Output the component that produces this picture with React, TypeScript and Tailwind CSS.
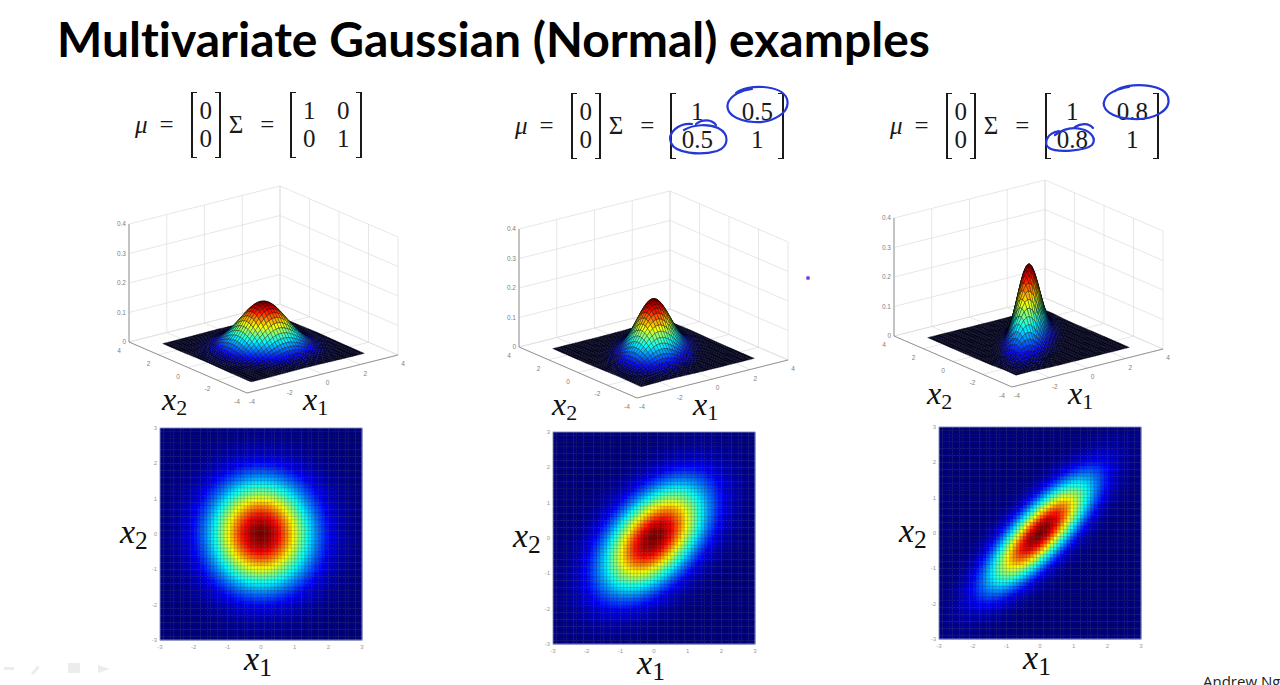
import { useMemo } from "react";

type Pt = [number, number];

const clamp = (x: number) => Math.max(0, Math.min(1, x));

// matlab "jet" colormap, with optional darkening factor k
function jet(v: number, k = 1): string {
  const r = clamp(1.5 - Math.abs(4 * v - 3)) * k;
  const g = clamp(1.5 - Math.abs(4 * v - 2)) * k;
  const b = clamp(1.5 - Math.abs(4 * v - 1)) * k;
  return `rgb(${Math.round(r * 255)},${Math.round(g * 255)},${Math.round(b * 255)})`;
}

function pdf(x: number, y: number, rho: number) {
  const d = 1 - rho * rho;
  return (
    Math.exp(-(x * x - 2 * rho * x * y + y * y) / (2 * d)) /
    (2 * Math.PI * Math.sqrt(d))
  );
}

// projection of the 3d box, measured off the slide
const O = { x: 147, y: 210 };
const E1 = { x: 151, y: -38 };
const E2 = { x: -118, y: -51 };
const EZ = -118;

function proj(a: number, b: number, z: number): Pt {
  const u = (a + 4) / 8;
  const v = (b + 4) / 8;
  return [O.x + u * E1.x + v * E2.x, O.y + u * E1.y + v * E2.y + (z / 0.4) * EZ];
}

const pts = (list: Pt[]) =>
  list.map((p) => `${p[0].toFixed(2)},${p[1].toFixed(2)}`).join(" ");

const TICKS = [-4, -2, 0, 2, 4];
const ZTICKS = [0, 0.1, 0.2, 0.3, 0.4];

function Line({ a, b, stroke = "#dcdcdc", w = 0.7 }: { a: Pt; b: Pt; stroke?: string; w?: number }) {
  return <line x1={a[0]} y1={a[1]} x2={b[0]} y2={b[1]} stroke={stroke} strokeWidth={w} />;
}

function Surface3D({ rho, dot }: { rho: number; dot?: boolean }) {
  const quads = useMemo(() => {
    const N = 40;
    const s = 6 / N;
    const peak = pdf(0, 0, rho);
    const list: { d: number; p: string; c: string }[] = [];
    for (let i = 0; i < N; i++) {
      for (let j = 0; j < N; j++) {
        const a0 = -3 + i * s;
        const b0 = -3 + j * s;
        const a1 = a0 + s;
        const b1 = b0 + s;
        const z00 = pdf(a0, b0, rho);
        const z10 = pdf(a1, b0, rho);
        const z11 = pdf(a1, b1, rho);
        const z01 = pdf(a0, b1, rho);
        const v = (z00 + z10 + z11 + z01) / 4 / peak;
        list.push({
          d: 38 * (a0 + s / 2) + 51 * (b0 + s / 2),
          p: pts([proj(a0, b0, z00), proj(a1, b0, z10), proj(a1, b1, z11), proj(a0, b1, z01)]),
          c: jet(v, 0.35 + 0.65 * clamp(v * 9)),
        });
      }
    }
    list.sort((x, y) => y.d - x.d);
    return list;
  }, [rho]);

  return (
    <svg width={320} height={240} className="block overflow-visible">
      {/* back wall x2 = 4 */}
      {TICKS.map((a) => (
        <Line key={"wa" + a} a={proj(a, 4, 0)} b={proj(a, 4, 0.4)} />
      ))}
      {ZTICKS.map((z) => (
        <Line key={"wz" + z} a={proj(-4, 4, z)} b={proj(4, 4, z)} />
      ))}
      {/* back wall x1 = 4 */}
      {TICKS.map((b) => (
        <Line key={"wb" + b} a={proj(4, b, 0)} b={proj(4, b, 0.4)} />
      ))}
      {ZTICKS.map((z) => (
        <Line key={"wz2" + z} a={proj(4, -4, z)} b={proj(4, 4, z)} />
      ))}
      {/* floor */}
      {TICKS.map((a) => (
        <Line key={"fa" + a} a={proj(a, -4, 0)} b={proj(a, 4, 0)} />
      ))}
      {TICKS.map((b) => (
        <Line key={"fb" + b} a={proj(-4, b, 0)} b={proj(4, b, 0)} />
      ))}
      {/* axes */}
      <Line a={proj(-4, 4, 0)} b={proj(-4, 4, 0.4)} stroke="#8a8a8a" w={0.9} />
      <Line a={proj(-4, -4, 0)} b={proj(-4, 4, 0)} stroke="#8a8a8a" w={0.9} />
      <Line a={proj(-4, -4, 0)} b={proj(4, -4, 0)} stroke="#8a8a8a" w={0.9} />

      {quads.map((q, i) => (
        <polygon
          key={i}
          points={q.p}
          fill={q.c}
          stroke="#000"
          strokeOpacity={0.8}
          strokeWidth={0.4}
        />
      ))}

      <g fontFamily="Liberation Sans, sans-serif" fontSize={6.5} fill="#808080">
        {ZTICKS.map((z) => {
          const p = proj(-4, 4, z);
          return (
            <text key={"tz" + z} x={p[0] - 3} y={p[1] + 2} textAnchor="end">
              {z === 0 ? "0" : z.toFixed(1)}
            </text>
          );
        })}
        {TICKS.map((b) => {
          const p = proj(-4, b, 0);
          return (
            <text key={"tb" + b} x={p[0] - 10} y={p[1] + 11} textAnchor="middle">
              {b}
            </text>
          );
        })}
        {TICKS.map((a) => {
          const p = proj(a, -4, 0);
          return (
            <text key={"ta" + a} x={p[0] + 5} y={p[1] + 11} textAnchor="middle">
              {a}
            </text>
          );
        })}
      </g>

      <g fontFamily="Liberation Serif, serif" fill="#111">
        <text x={62} y={227} fontSize={32} fontStyle="italic">
          x<tspan fontSize={22} fontStyle="normal" dy={5}>2</tspan>
        </text>
        <text x={203} y={227} fontSize={32} fontStyle="italic">
          x<tspan fontSize={22} fontStyle="normal" dy={5}>1</tspan>
        </text>
      </g>
      {dot && <circle cx={318} cy={90} r={2} fill="#7a44e6" />}
    </svg>
  );
}

function Heatmap({ rho }: { rho: number }) {
  const N = 60;
  const W = 202;
  const H = 212;
  const L = 12;
  const T = 4;
  const cw = W / N;
  const ch = H / N;
  const cells = useMemo(() => {
    const peak = pdf(0, 0, rho);
    const out: { x: number; y: number; c: string }[] = [];
    for (let r = 0; r < N; r++) {
      for (let c = 0; c < N; c++) {
        const x = -3 + ((c + 0.5) * 6) / N;
        const y = 3 - ((r + 0.5) * 6) / N;
        out.push({ x: L + c * cw, y: T + r * ch, c: jet(pdf(x, y, rho) / peak) });
      }
    }
    return out;
  }, [rho, cw, ch]);

  const labels = [-3, -2, -1, 0, 1, 2, 3];
  return (
    <svg width={220} height={232} className="block">
      {cells.map((k, i) => (
        <rect key={i} x={k.x} y={k.y} width={cw + 0.3} height={ch + 0.3} fill={k.c} />
      ))}
      <g stroke="#000" strokeOpacity={0.35} strokeWidth={0.5}>
        {Array.from({ length: N + 1 }, (_, i) => (
          <line key={"v" + i} x1={L + i * cw} y1={T} x2={L + i * cw} y2={T + H} />
        ))}
        {Array.from({ length: N + 1 }, (_, i) => (
          <line key={"h" + i} x1={L} y1={T + i * ch} x2={L + W} y2={T + i * ch} />
        ))}
      </g>
      <rect x={L} y={T} width={W} height={H} fill="none" stroke="#8f9fd0" strokeWidth={0.8} />
      <g fontFamily="Liberation Sans, sans-serif" fontSize={6} fill="#999">
        {labels.map((t) => (
          <text key={"l" + t} x={L - 3} y={T + ((3 - t) / 6) * H + 2} textAnchor="end">
            {t}
          </text>
        ))}
        {labels.map((t) => (
          <text key={"b" + t} x={L + ((t + 3) / 6) * W} y={T + H + 9} textAnchor="middle">
            {t}
          </text>
        ))}
      </g>
    </svg>
  );
}

function Bracketed({ children, className }: { children: React.ReactNode; className: string }) {
  return (
    <div className="flex items-stretch">
      <div className="w-[6px] border-y-[1.5px] border-l-2 border-[#1a1a1a]" />
      <div className={className}>{children}</div>
      <div className="w-[6px] border-y-[1.5px] border-r-2 border-[#1a1a1a]" />
    </div>
  );
}

function Scribble({ paths }: { paths: string[] }) {
  return (
    <svg
      width={130}
      height={70}
      className="pointer-events-none absolute left-0 top-0 overflow-visible"
    >
      {paths.map((d, i) => (
        <path
          key={i}
          d={d}
          fill="none"
          stroke="#2438d6"
          strokeWidth={2.2}
          strokeLinecap="round"
          strokeLinejoin="round"
        />
      ))}
    </svg>
  );
}

type Col = {
  rho: number;
  m: string[][];
  wide: boolean;
  scribble: string[];
  colClass: string;
  formulaClass: string;
  plotClass: string;
  heatClass: string;
  labelClass: string;
  dot?: boolean;
};

const columns: Col[] = [
  {
    rho: 0,
    m: [
      ["1", "0"],
      ["0", "1"],
    ],
    wide: false,
    scribble: [],
    colClass: "w-[390px]",
    formulaClass: "mt-[4px] ml-[35px]",
    plotClass: "mt-[25px]",
    heatClass: "mt-[1px]",
    labelClass: "ml-[20px]",
  },
  {
    rho: 0.5,
    m: [
      ["1", "0.5"],
      ["0.5", "1"],
    ],
    wide: true,
    scribble: [
      "M 66 0 C 76 -9, 112 -9, 117 6 C 121 20, 102 30, 84 29 C 66 28, 55 20, 58 10 C 61 2, 72 -3, 82 -4",
      "M 22 31 C 8 30, -3 40, 1 50 C 5 60, 30 63, 47 58 C 59 54, 60 41, 48 35 C 39 31, 24 31, 14 37",
      "M 26 31 C 32 26, 42 26, 46 32",
    ],
    colClass: "w-[375px]",
    formulaClass: "mt-[5px] ml-[25px]",
    plotClass: "mt-[29px]",
    heatClass: "mt-0",
    labelClass: "ml-[23px]",
    dot: true,
  },
  {
    rho: 0.8,
    m: [
      ["1", "0.8"],
      ["0.8", "1"],
    ],
    wide: true,
    scribble: [
      "M 70 -2 C 82 -11, 118 -10, 123 4 C 127 18, 108 27, 88 26 C 66 25, 55 16, 60 6 C 63 0, 72 -4, 84 -6",
      "M 14 38 C 2 40, -2 50, 4 55 C 12 60, 40 58, 47 52 C 52 46, 46 38, 36 36 C 28 34, 18 36, 10 42",
      "M 30 34 C 36 30, 44 30, 48 35",
    ],
    colClass: "w-[400px]",
    formulaClass: "mt-[5px] ml-[25px]",
    plotClass: "mt-[18px]",
    heatClass: "mt-[6px]",
    labelClass: "ml-[34px]",
  },
];

function MathX({ sub }: { sub: string }) {
  return (
    <span className="font-['Liberation_Serif',serif] text-[34px] italic leading-[30px] text-[#111]">
      x<sub className="not-italic">{sub}</sub>
    </span>
  );
}

function Formula({ col }: { col: Col }) {
  return (
    <div
      className={`flex h-[66px] items-center font-['Liberation_Serif',serif] text-[25px] text-[#1a1a1a] ${col.formulaClass}`}
    >
      <span className="italic">μ</span>
      <span className="ml-[12px]">=</span>
      <div className="ml-[17px] self-stretch">
        <Bracketed className="grid w-[18px] grid-cols-1 py-[5px] text-center leading-[28px]">
          <span>0</span>
          <span>0</span>
        </Bracketed>
      </div>
      <span className="ml-[8px]">Σ</span>
      <span className="ml-[17px]">=</span>
      <div className="relative ml-[16px] self-stretch">
        <Bracketed
          className={
            col.wide
              ? "grid grid-cols-[42px_42px] gap-x-[18px] py-[5px] text-center leading-[28px]"
              : "grid grid-cols-[14px_14px] gap-x-[20px] px-[6px] py-[5px] text-center leading-[28px]"
          }
        >
          {col.m.flat().map((v, i) => (
            <span key={i}>{v}</span>
          ))}
        </Bracketed>
        {col.scribble.length > 0 && <Scribble paths={col.scribble} />}
      </div>
    </div>
  );
}

export default function App() {
  return (
    <div className="relative h-[685px] w-[1280px] overflow-hidden bg-white">
      <h1 className="h-[88px] pl-[57px] pt-[11px] font-['Lato',sans-serif] text-[48px] font-bold leading-[56px] text-black [font-variant-ligatures:none]">
        Multivariate Gaussian (Normal) examples
      </h1>

      <div className="flex pl-[100px]">
        {columns.map((col, i) => (
          <div key={i} className={`flex shrink-0 flex-col ${col.colClass}`}>
            <Formula col={col} />
            <div className={col.plotClass}>
              <Surface3D rho={col.rho} dot={col.dot} />
            </div>
            <div className={`flex items-center ${col.heatClass}`}>
              <div className={`mb-[34px] w-[28px] ${col.labelClass}`}>
                <MathX sub="2" />
              </div>
              <div className="flex flex-col items-center">
                <Heatmap rho={col.rho} />
                <div className="-mt-[12px]">
                  <MathX sub="1" />
                </div>
              </div>
            </div>
          </div>
        ))}
      </div>

      {/* faint player controls, bottom left */}
      <svg width={130} height={24} className="absolute bottom-[4px] left-0">
        <g fill="#ececec">
          <rect x={4} y={10} width={10} height={3} />
          <rect x={34} y={8} width={3} height={10} transform="rotate(40 35 13)" />
          <rect x={68} y={6} width={12} height={10} />
          <path d="M 98 8 L 110 12 L 98 16 Z" />
        </g>
      </svg>

      <div className="absolute left-[1203px] top-[670px] whitespace-nowrap font-['Open_Sans',sans-serif] text-[15px] text-[#222]">
        Andrew Ng
      </div>
    </div>
  );
}
